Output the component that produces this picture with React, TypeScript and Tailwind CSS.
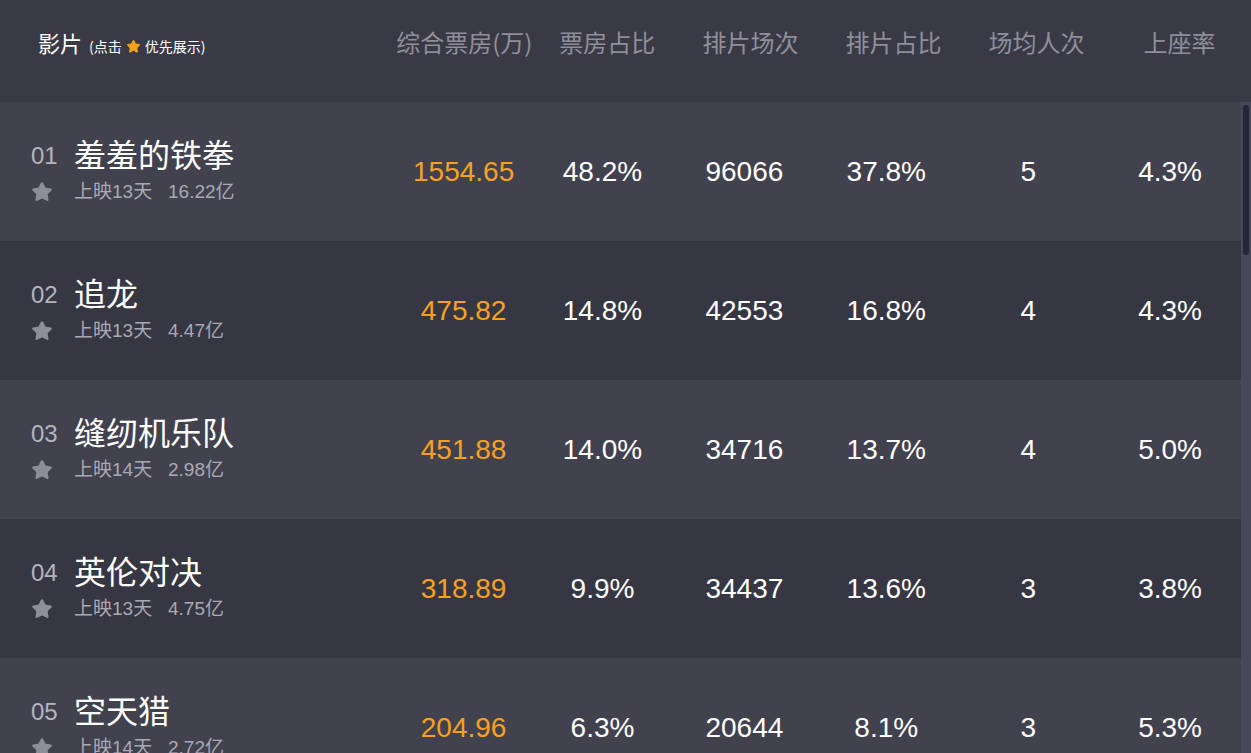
import { Star } from 'lucide-react';

type Movie = {
  rank: string;
  name: string;
  days: number;
  total: string;
  boxOffice: string;
  boxRate: string;
  shows: string;
  showRate: string;
  avgSeat: string;
  seatRate: string;
};

const movies: Array<Movie> = [
  { rank: '01', name: '羞羞的铁拳', days: 13, total: '16.22亿', boxOffice: '1554.65', boxRate: '48.2%', shows: '96066', showRate: '37.8%', avgSeat: '5', seatRate: '4.3%' },
  { rank: '02', name: '追龙', days: 13, total: '4.47亿', boxOffice: '475.82', boxRate: '14.8%', shows: '42553', showRate: '16.8%', avgSeat: '4', seatRate: '4.3%' },
  { rank: '03', name: '缝纫机乐队', days: 14, total: '2.98亿', boxOffice: '451.88', boxRate: '14.0%', shows: '34716', showRate: '13.7%', avgSeat: '4', seatRate: '5.0%' },
  { rank: '04', name: '英伦对决', days: 13, total: '4.75亿', boxOffice: '318.89', boxRate: '9.9%', shows: '34437', showRate: '13.6%', avgSeat: '3', seatRate: '3.8%' },
  { rank: '05', name: '空天猎', days: 14, total: '2.72亿', boxOffice: '204.96', boxRate: '6.3%', shows: '20644', showRate: '8.1%', avgSeat: '3', seatRate: '5.3%' },
];

const columns = ['综合票房(万)', '票房占比', '排片场次', '排片占比', '场均人次', '上座率'];

const cjk = "font-['Noto_Sans_CJK_SC',sans-serif]";
const num = "font-['Liberation_Sans','Noto_Sans_CJK_SC',sans-serif]";

function MovieRow({ movie, index }: { movie: Movie; index: number }) {
  const values = [movie.boxRate, movie.shows, movie.showRate, movie.avgSeat, movie.seatRate];
  return (
    <div
      className={
        'grid h-[139px] shrink-0 grid-cols-[31.4%_repeat(6,1fr)] items-center ' +
        (index % 2 === 0 ? 'bg-[#42424f]' : 'bg-[#373743]')
      }
    >
      <div className="flex flex-col pb-[4px] pl-[31px]">
        <div className="flex items-center">
          <span className={`w-[43px] pt-[5px] text-[24px] leading-none text-[#b4b4be] ${num}`}>{movie.rank}</span>
          <span className={`text-[32px] leading-[36px] text-white ${cjk}`}>{movie.name}</span>
        </div>
        <div className="mt-[9px] flex items-center">
          <span className="w-[43px]">
            <Star className="h-[22px] w-[22px] fill-[#8e8e9a] text-[#8e8e9a]" strokeWidth={1.5} />
          </span>
          <span className={`text-[19px] leading-[24px] text-[#a9a9b5] ${num}`}>
            上映{movie.days}天&nbsp;&nbsp;&nbsp;{movie.total}
          </span>
        </div>
      </div>
      <div className={`pl-[6px] text-center text-[28px] text-[#f7a11f] ${num}`}>{movie.boxOffice}</div>
      {values.map((v, i) => (
        <div key={i} className={`text-center text-[28px] text-white ${num}`}>
          {v}
        </div>
      ))}
    </div>
  );
}

export default function App() {
  return (
    <div className="flex h-[753px] w-[1251px] flex-col overflow-hidden bg-[#3a3a46]">
      <div className="grid h-[102px] shrink-0 grid-cols-[31.4%_repeat(6,1fr)] items-start bg-[#3a3a46] pt-[27px]">
        <div className={`flex items-baseline pl-[38px] text-white ${cjk}`}>
          <span className="text-[22px] leading-[30px]">影片</span>
          <span className="ml-[7px] flex items-center text-[14px]">
            (点击
            <Star className="mx-[4px] h-[15px] w-[15px] fill-[#f5a316] text-[#f5a316]" strokeWidth={1.5} />
            优先展示)
          </span>
        </div>
        {columns.map((c) => (
          <div key={c} className={`text-center text-[24px] leading-[30px] text-[#8f8f9b] ${cjk}`}>
            {c}
          </div>
        ))}
      </div>
      <div className="flex min-h-0 flex-1">
        <div className="flex min-w-0 flex-1 flex-col overflow-hidden">
          {movies.map((m, i) => (
            <MovieRow key={m.rank} movie={m} index={i} />
          ))}
        </div>
        <div className="w-[10px] shrink-0 bg-[#48485a] pt-[3px]">
          <div className="mx-auto h-[150px] w-[6px] rounded-[3px] bg-[#26263a]" />
        </div>
      </div>
    </div>
  );
}
